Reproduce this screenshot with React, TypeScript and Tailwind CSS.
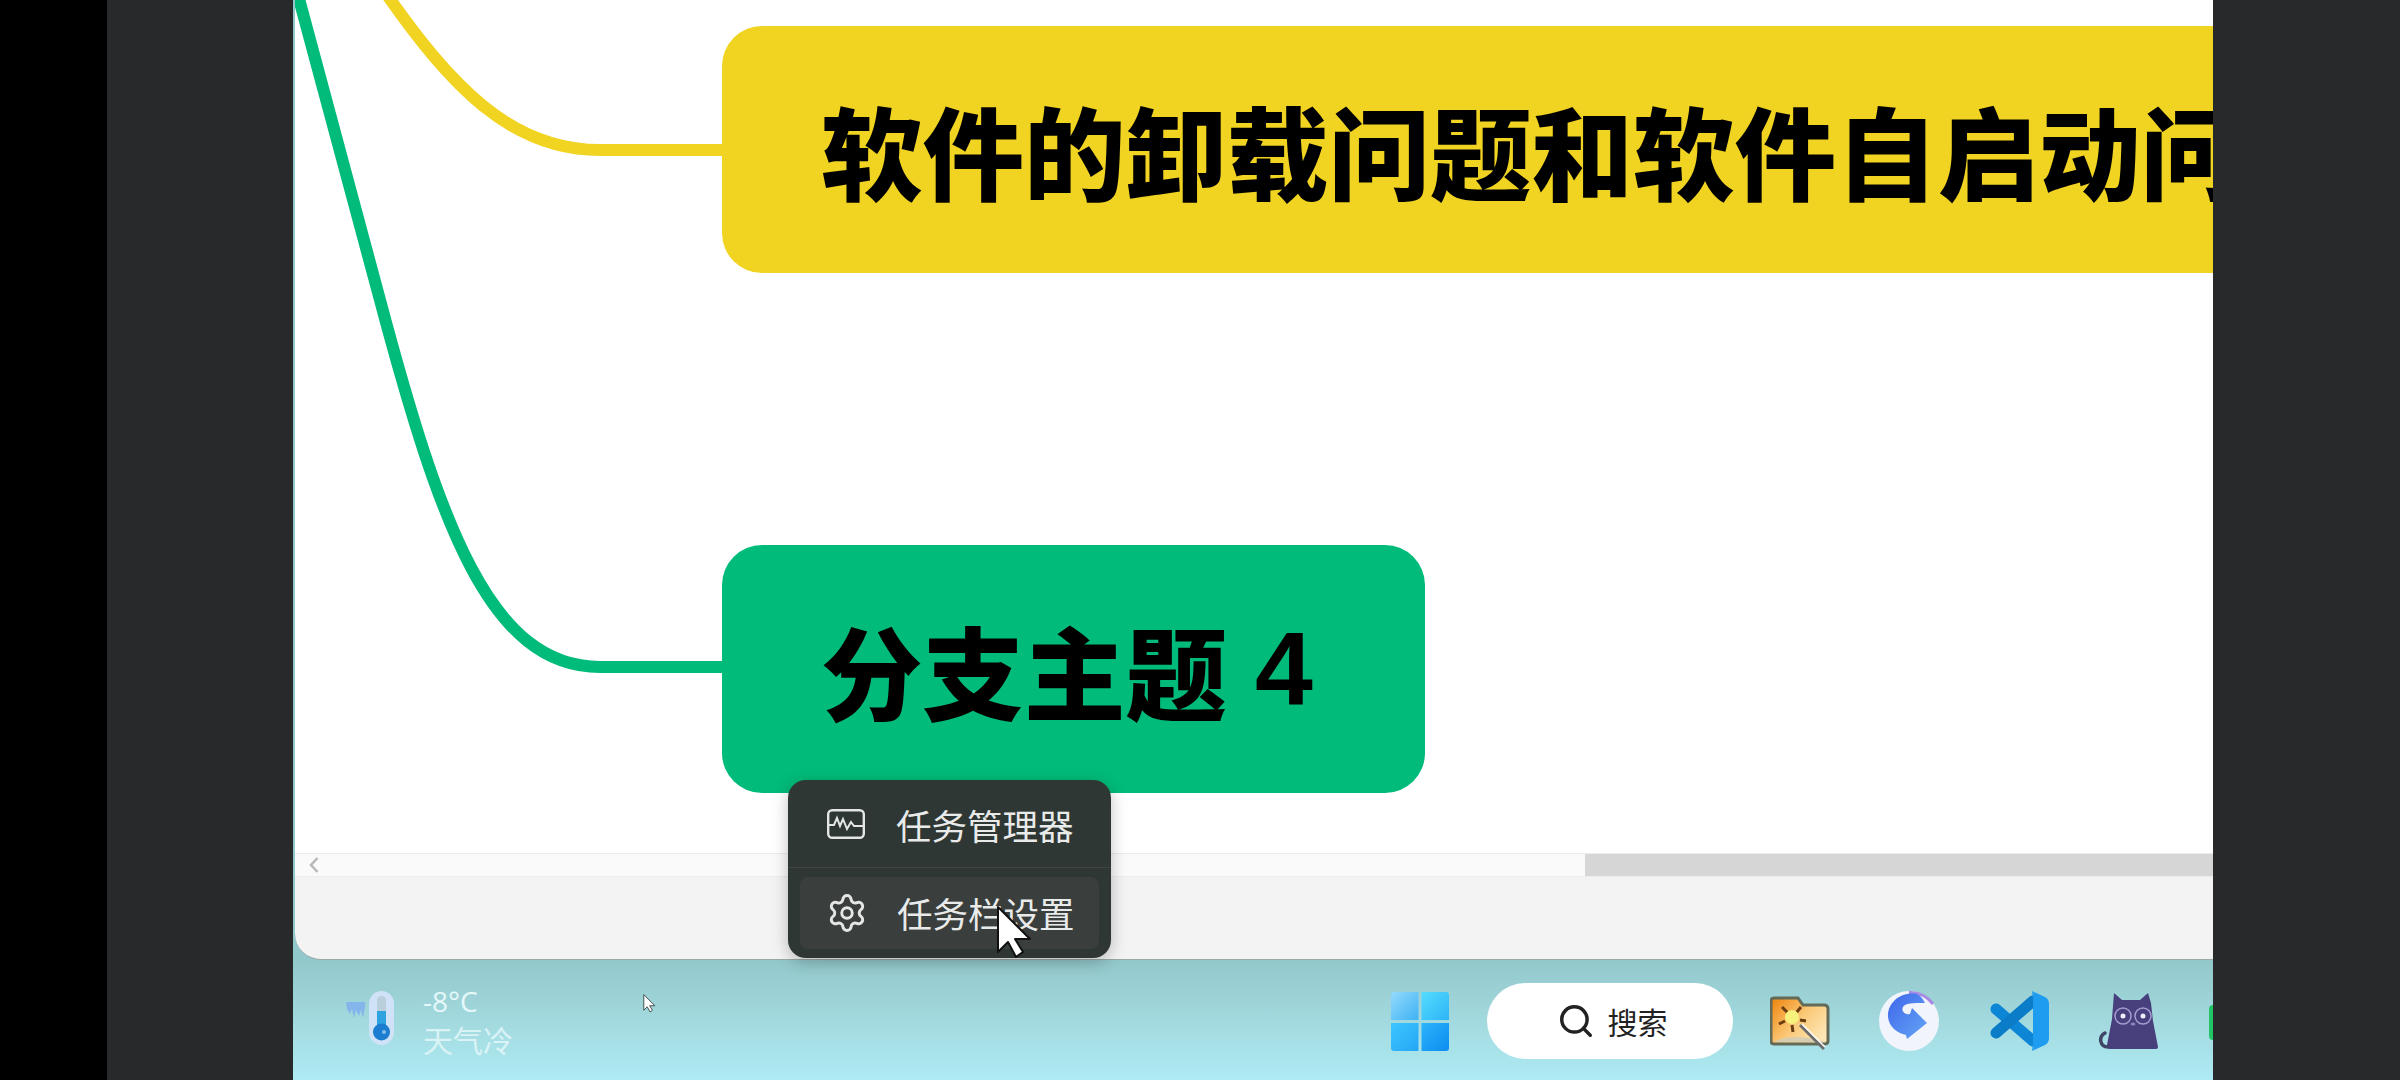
import React from "react";
import { Search, Settings } from "lucide-react";

const cjk = "font-['Noto_Sans_CJK_SC','Noto_Sans',sans-serif]";

const Cursor = ({ className }: { className: string }) => (
  <svg viewBox="-2 -2 37 55" className={className}>
    <path
      d="M0 0V45L10 35L18 50L25 45L17 32H32Z"
      fill="#fff"
      stroke="#111"
      strokeWidth="2"
      strokeLinejoin="round"
    />
  </svg>
);

const Thermometer = () => (
  <svg width="50" height="54" viewBox="0 0 50 54">
    <path d="M1 11H20V16L18 27L16 19L14 25L11 19L9 27L7 18L5 23L2 18Z" fill="#7fb0ee" opacity="0.85" />
    <rect x="24" y="0" width="25" height="54" rx="12.5" fill="#cfe2f7" />
    <rect x="32" y="5" width="9" height="36" rx="4.5" fill="#b9cfdc" />
    <rect x="32" y="20" width="9" height="22" fill="#2fa3e0" />
    <circle cx="36.5" cy="41" r="8.5" fill="#1b7cd0" />
    <circle cx="39" cy="41" r="2" fill="#7fc0ee" />
  </svg>
);

const WindowsLogo = () => (
  <svg width="58" height="59" viewBox="0 0 58 59">
    <defs>
      <linearGradient id="w1" x1="0" y1="0" x2="1" y2="1">
        <stop offset="0" stopColor="#93dafc" />
        <stop offset="1" stopColor="#3fb2f4" />
      </linearGradient>
      <linearGradient id="w2" x1="0" y1="0" x2="1" y2="1">
        <stop offset="0" stopColor="#55dcff" />
        <stop offset="1" stopColor="#2db4f6" />
      </linearGradient>
      <linearGradient id="w3" x1="0" y1="0" x2="1" y2="1">
        <stop offset="0" stopColor="#3cc6ff" />
        <stop offset="1" stopColor="#25a6f5" />
      </linearGradient>
      <linearGradient id="w4" x1="0" y1="0" x2="1" y2="1">
        <stop offset="0" stopColor="#2cb4fb" />
        <stop offset="1" stopColor="#0c8cf0" />
      </linearGradient>
    </defs>
    <path d="M3 0H27.5V28H0V3Q0 0 3 0Z" fill="url(#w1)" />
    <path d="M30.5 0H55Q58 0 58 3V28H30.5Z" fill="url(#w2)" />
    <path d="M0 31H27.5V59H3Q0 59 0 56Z" fill="url(#w3)" />
    <path d="M30.5 31H58V56Q58 59 55 59H30.5Z" fill="url(#w4)" />
  </svg>
);

const FolderIcon = () => (
  <svg width="60" height="56" viewBox="0 0 60 56">
    <defs>
      <linearGradient id="fd" x1="0" y1="0" x2="1" y2="0.7">
        <stop offset="0" stopColor="#ee8208" />
        <stop offset="0.55" stopColor="#fbc877" />
        <stop offset="1" stopColor="#fde6b4" />
      </linearGradient>
    </defs>
    <path
      d="M4 2H28L33 9H54Q58 9 58 13V45Q58 48 54 48H4Q1 48 1 45V5Q1 2 4 2Z"
      fill="url(#fd)"
      stroke="#636a58"
      strokeWidth="3"
    />
    <path d="M4 46Q22 36 56 46Z" fill="#d8cdb0" />
    <path d="M12 11L18 17M31 11L26 17M9 28L15 25M23 36L22 29M36 25L30 24" stroke="#6b3d12" strokeWidth="3" />
    <circle cx="22" cy="21" r="7" fill="#f7f27e" />
    <path d="M30 29L54 53" stroke="#6c6c6c" strokeWidth="3" />
    <path d="M32 28L55 51" stroke="#fff" strokeWidth="1.5" />
  </svg>
);

const SwirlIcon = () => (
  <svg width="60" height="60" viewBox="0 0 60 60">
    <defs>
      <linearGradient id="sw" x1="0" y1="0" x2="1" y2="1">
        <stop offset="0" stopColor="#3f66ea" />
        <stop offset="1" stopColor="#64a6f6" />
      </linearGradient>
    </defs>
    <circle cx="30" cy="30" r="30" fill="#f2f4fb" />
    <path d="M30 1.5A29 29 0 0 1 54 13" fill="none" stroke="#a98ae2" strokeWidth="3" />
    <path
      d="M38 3C22 0 8 12 9 26C10 36 18 42 27 44L28 48L48 32L33 17L31 23C26 24 22 20 24 16C26 12 34 12 46 12C44 8 42 5 38 3Z"
      fill="url(#sw)"
    />
  </svg>
);

const VsCodeIcon = () => (
  <svg width="60" height="60" viewBox="0 0 60 60">
    <path d="M7 18L44 50" stroke="#0e86d6" strokeWidth="11" strokeLinecap="round" />
    <path d="M7 42L44 10" stroke="#0a7cc8" strokeWidth="11" strokeLinecap="round" />
    <path d="M43 0L56 6Q60 8 60 13V47Q60 52 56 54L43 60Q46 58 44 52V8Q46 2 43 0Z" fill="#1e9cf0" />
    <path d="M43 0Q46 2 44 8V52Q46 58 43 60L44 50V10Z" fill="#1e9cf0" />
  </svg>
);

const CatIcon = () => (
  <svg width="62" height="60" viewBox="0 0 62 60">
    <path
      d="M16 2L24 9H42L50 2L53 12L55 30L60 56Q60 58 58 58H12Q9 58 9 54L14 28Z"
      fill="#483f7d"
    />
    <path d="M10 56C2 56 0 46 7 42" fill="none" stroke="#3f4668" strokeWidth="3.5" strokeLinecap="round" />
    <circle cx="25" cy="25" r="8" fill="none" stroke="#a49ccf" strokeWidth="1.5" />
    <circle cx="45" cy="25" r="8" fill="none" stroke="#a49ccf" strokeWidth="1.5" />
    <circle cx="25" cy="25" r="2.5" fill="#eeeefa" />
    <circle cx="45" cy="25" r="2.5" fill="#eeeefa" />
    <ellipse cx="35" cy="33" rx="2.5" ry="1.5" fill="#8b83bd" />
  </svg>
);

const TaskManagerIcon = () => (
  <svg width="38" height="30" viewBox="0 0 38 30" fill="none" stroke="#e3e6e5">
    <rect x="1.2" y="1.2" width="35.6" height="27.6" rx="4" strokeWidth="2.4" />
    <path d="M2 16H7L10 9L13 17L16 10L20 20L24 13L27 17H36" strokeWidth="2" />
  </svg>
);

export default function App() {
  return (
    <div className={`flex h-[1080px] w-[2400px] overflow-hidden bg-black ${cjk}`}>
      <div className="w-[107px] bg-black" />
      <div className="w-[186px] bg-[#27292a]" />

      <div className="relative flex w-[1920px] flex-col bg-[#92c8cc]">
        <div className="ml-[2px] flex h-[960px] flex-col">
          <div className="relative h-[853px] overflow-hidden bg-white">
            <svg
              className="absolute inset-0 h-full w-full"
              viewBox="295 0 1918 853"
              fill="none"
            >
              <path
                d="M298 -5L380 300C440 525 490 667 600 667H730"
                stroke="#00bb79"
                strokeWidth="12"
              />
              <path
                d="M385 -8C450 85 510 150 600 150H730"
                stroke="#f1d321"
                strokeWidth="12"
              />
            </svg>
            <div className="absolute left-[427px] right-0 top-[26px] flex h-[247px] items-center overflow-hidden whitespace-nowrap rounded-l-[40px] bg-[#f1d321] pl-[99px] text-[101.5px] font-black text-black">
              软件的卸载问题和软件自启动问题
            </div>
            <div className="absolute left-[427px] top-[545px] flex h-[248px] w-[703px] items-center whitespace-nowrap rounded-[40px] bg-[#00bb79] pl-[99px] text-[101.5px] font-black text-black">
              分支主题
              <span className="ml-[28px] font-['Liberation_Sans',sans-serif] text-[104px] font-bold">4</span>
            </div>
          </div>

          <div className="flex h-[24px] border-y border-[#ececec] bg-[#fafafa]">
            <div className="flex flex-1 items-center pl-[14px]">
              <svg width="10" height="16" viewBox="0 0 10 16" fill="none" stroke="#b8b8b8" strokeWidth="2.5">
                <path d="M8.5 1L2 8L8.5 15" />
              </svg>
            </div>
            <div className="w-[628px] bg-[#d6d6d6]" />
          </div>

          <div className="flex-1 rounded-bl-[26px] border-b border-[#9aa8a8] bg-[#f3f3f3]" />
        </div>

        <div className="flex h-[120px] items-start bg-gradient-to-b from-[#93c8cb] via-[#a2d9de] to-[#aeebf4]">
          <div className="ml-[52px] mt-[31px]">
            <Thermometer />
          </div>
          <div className="ml-[28px] mt-[24px] flex w-[90px] flex-col leading-none text-[#e6f8fa]">
            <span className="font-['Open_Sans',sans-serif] text-[28px] leading-[34px]">-8°C</span>
            <span className="text-[30px] leading-[42px] opacity-80">天气冷</span>
          </div>
          <div className="ml-[878px] mt-[32px]">
            <WindowsLogo />
          </div>
          <div className="ml-[38px] mt-[23px] flex h-[76px] w-[246px] items-center justify-center gap-[13px] rounded-full bg-white pl-[4px] text-[30px] text-[#222]">
            <Search size={38} strokeWidth={2.2} color="#222" />
            <span>搜索</span>
          </div>
          <div className="ml-[37px] mt-[36px]">
            <FolderIcon />
          </div>
          <div className="ml-[49px] mt-[31px]">
            <SwirlIcon />
          </div>
          <div className="ml-[50px] mt-[31px]">
            <VsCodeIcon />
          </div>
          <div className="ml-[49px] mt-[31px]">
            <CatIcon />
          </div>
          <div className="ml-[49px] mt-[45px] h-[35px] w-[4px] rounded-l-full bg-[#22c566]" />
        </div>

        <div className="absolute left-[495px] top-[780px] w-[323px] rounded-[18px] bg-[#2f3734] text-[35.5px] leading-none text-[#e8ebea] shadow-[0_4px_16px_rgba(0,0,0,0.25)]">
          <div className="flex h-[88px] items-center gap-[31px] border-b border-[#3e4542] pl-[39px]">
            <TaskManagerIcon />
            <span className="mt-[3px]">任务管理器</span>
          </div>
          <div className="px-[12px] pb-[9px] pt-[9px]">
            <div className="flex h-[72px] items-center gap-[29px] rounded-[8px] bg-[#3a3e3c] pl-[26px]">
              <Settings size={42} strokeWidth={1.7} color="#e3e6e5" />
              <span>任务栏设置</span>
            </div>
          </div>
        </div>

        <Cursor className="absolute left-[703px] top-[905px] h-[55px] w-[37px]" />
        <Cursor className="absolute left-[350px] top-[994px] h-[19px] w-[13px]" />
      </div>

      <div className="w-[187px] bg-[#27292a]" />
    </div>
  );
}
